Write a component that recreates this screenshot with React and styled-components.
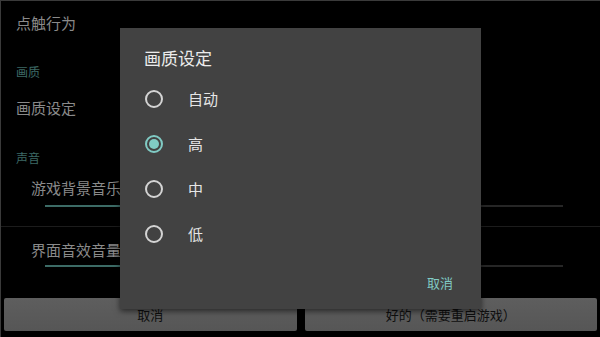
import React from "react";
import styled, { createGlobalStyle } from "styled-components";

const Global = createGlobalStyle`
  html, body { margin: 0; padding: 0; background: #000; }
  body { font-family: "Noto Sans CJK SC", "Noto Sans", sans-serif; }
  * { box-sizing: border-box; }
`;

const Screen = styled.div`
  position: relative;
  width: 600px;
  height: 337px;
  background: #000;
  border-top: 1px solid #3a3a3a;
  border-left: 1px solid #3a3a3a;
  overflow: hidden;
  display: flex;
  flex-direction: column;
`;

const Item = styled.div`
  height: ${(p) => p.$h}px;
  margin-top: ${(p) => p.$mt || 0}px;
  padding-left: ${(p) => p.$indent}px;
  display: flex;
  align-items: center;
  color: #8a8a8a;
  font-size: 15px;
  line-height: 1;
`;

const Header = styled.div`
  height: 20px;
  margin-top: ${(p) => p.$mt}px;
  padding-left: 15px;
  display: flex;
  align-items: center;
  color: #3d6a66;
  font-size: 12px;
  line-height: 1;
`;

const Track = styled.div`
  margin-top: ${(p) => p.$mt}px;
  margin-left: 44px;
  width: 518px;
  height: 2px;
  background: #262626;
  display: flex;
`;

const Fill = styled.div`
  height: 100%;
  background: #3c6b66;
`;

const Divider = styled.div`
  margin-top: ${(p) => p.$mt}px;
  height: 1px;
  background: #1c1c1c;
`;

const ButtonRow = styled.div`
  margin-top: 31px;
  height: 33px;
  padding: 0 3px 0 3px;
  display: flex;
  gap: 8px;
`;

const Button = styled.div`
  flex: 1;
  background: linear-gradient(#5e5e5e, #565656);
  border-radius: 2px;
  display: flex;
  align-items: center;
  justify-content: center;
  color: #0e0e0e;
  font-size: 13px;
  line-height: 1;
`;

const Dialog = styled.div`
  position: absolute;
  left: 119px;
  top: 27px;
  width: 361px;
  height: 281px;
  background: #424242;
  box-shadow: 0 2px 6px rgba(0, 0, 0, 0.6);
  display: flex;
  flex-direction: column;
`;

const Title = styled.div`
  height: 20px;
  margin-top: 19px;
  padding-left: 24px;
  display: flex;
  align-items: center;
  color: #ececec;
  font-size: 17px;
  line-height: 1;
`;

const Options = styled.div`
  margin-top: 9px;
  display: flex;
  flex-direction: column;
`;

const Option = styled.div`
  height: 45px;
  display: flex;
  align-items: center;
  padding-left: 25px;
`;

const Radio = styled.div`
  width: 18px;
  height: 18px;
  border-radius: 50%;
  border: 2px solid ${(p) => (p.$on ? "#80cbc4" : "#d4d4d4")};
  display: flex;
  align-items: center;
  justify-content: center;
  &::after {
    content: "";
    width: 10px;
    height: 10px;
    border-radius: 50%;
    background: ${(p) => (p.$on ? "#80cbc4" : "transparent")};
  }
`;

const OptionLabel = styled.span`
  margin-left: 25px;
  color: #e6e6e6;
  font-size: 15px;
  line-height: 1;
`;

const Actions = styled.div`
  margin-top: auto;
  height: 50px;
  padding: 0 28px 4px 0;
  display: flex;
  justify-content: flex-end;
  align-items: center;
`;

const TextButton = styled.span`
  color: #80cbc4;
  font-size: 13px;
  line-height: 1;
`;

const options = ["自动", "高", "中", "低"];

export default function App() {
  return (
    <Screen>
      <Global />
      <Item $h={44} $indent={15} $mt={-1}>点触行为</Item>
      <Header $mt={18}>画质</Header>
      <Item $h={30} $indent={15} $mt={10}>画质设定</Item>
      <Header $mt={26}>声音</Header>
      <Item $h={20} $indent={30} $mt={9}>游戏背景音乐</Item>
      <Track $mt={8}>
        <Fill style={{ width: "50%" }} />
      </Track>
      <Divider $mt={19} />
      <Item $h={20} $indent={30} $mt={12}>界面音效音量</Item>
      <Track $mt={6}>
        <Fill style={{ width: "50%" }} />
      </Track>
      <ButtonRow>
        <Button>取消</Button>
        <Button>好的（需要重启游戏）</Button>
      </ButtonRow>
      <Dialog>
        <Title>画质设定</Title>
        <Options>
          {options.map((o, i) => (
            <Option key={o}>
              <Radio $on={i === 1} />
              <OptionLabel>{o}</OptionLabel>
            </Option>
          ))}
        </Options>
        <Actions>
          <TextButton>取消</TextButton>
        </Actions>
      </Dialog>
    </Screen>
  );
}
